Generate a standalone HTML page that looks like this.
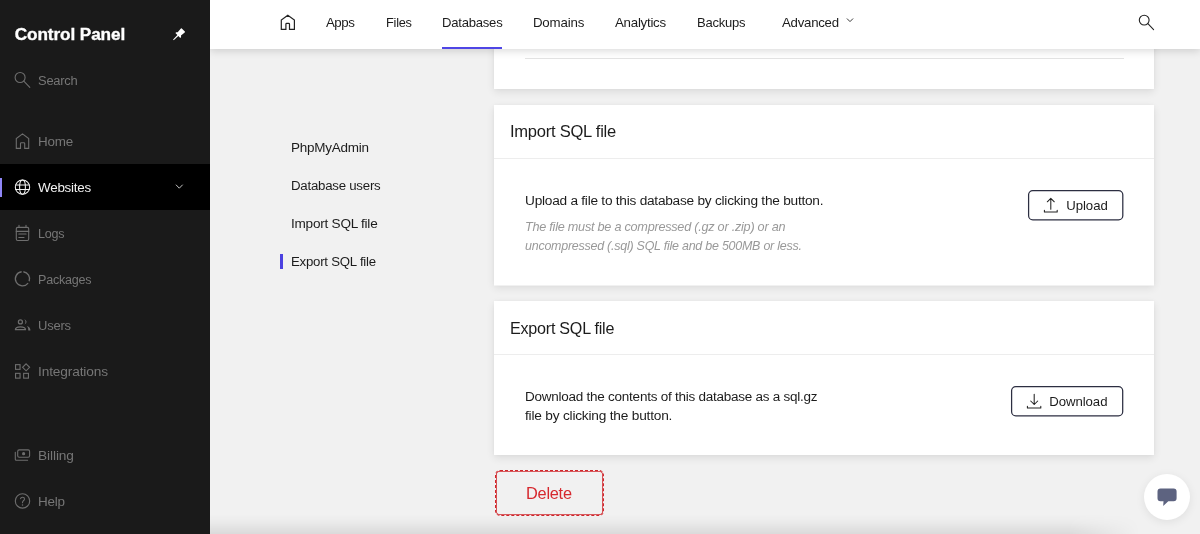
<!DOCTYPE html>
<html lang="en">
<head>
<meta charset="utf-8">
<title>Control Panel</title>
<style>
*{box-sizing:border-box;margin:0;padding:0}
html,body{width:1200px;height:534px;overflow:hidden;background:#f1f1f1}
body{font-family:"Liberation Sans","DejaVu Sans",sans-serif;position:relative}
#root{position:absolute;left:0;top:0;width:1200px;height:534px;overflow:hidden;will-change:transform;background:#f1f1f1}
.abs{position:absolute}
.t{position:absolute;line-height:20px;white-space:nowrap}
.brand{-webkit-text-stroke:0.35px #fff}
#side{position:absolute;left:0;top:0;width:210px;height:534px;background:#1a1a1a}
#active{position:absolute;left:0;top:164px;width:210px;height:46px;background:#000}
#active:before{content:"";position:absolute;left:0;top:14px;width:2.3px;height:19px;background:#8f86f7}
#top{position:absolute;left:210px;top:0;width:990px;height:49px;background:#fff;box-shadow:0 1.5px 8px rgba(0,0,0,.15)}
#uline{position:absolute;left:442px;top:47px;width:60.3px;height:2px;background:#4f46e5}
.card{position:absolute;left:494.3px;width:659.7px;background:#fff;box-shadow:0 3px 8px rgba(0,0,0,.09),0 0 3px rgba(0,0,0,.03)}
.hr{position:absolute;left:0;right:0;height:1.3px;background:#ededed}
.btn{position:absolute;border:1.2px solid #2b2e45;border-radius:4.5px;background:#fff}
#del{}
#delbox{position:absolute;left:494.5px;top:470px;width:109.3px;height:46px;border:1px dashed #d0272d;border-radius:5px;box-shadow:inset 0 0 0 0.8px #d0272d}
#chat{position:absolute;left:1144px;top:474px;width:46px;height:46px;border-radius:50%;background:#fff;box-shadow:0 2px 10px rgba(0,0,0,.08)}
#bshadow{position:absolute;left:0;top:514px;width:1200px;height:20px;background:linear-gradient(to bottom,rgba(0,0,0,0) 0%,rgba(0,0,0,.025) 40%,rgba(0,0,0,.095) 100%);-webkit-mask-image:linear-gradient(to right,#000 0,#000 89%,transparent 95%);mask-image:linear-gradient(to right,#000 0,#000 89%,transparent 95%)}
#icons{position:absolute;left:0;top:0}
</style>
</head>
<body>
<div id="root">

<!-- cards -->
<div class="card" style="top:20px;height:69px"><div class="hr" style="left:30.7px;right:30px;top:38px;height:1px;background:#e3e3e3"></div></div>
<div class="card" style="top:105px;height:180.3px"><div class="hr" style="top:52.8px"></div></div>
<div class="card" style="top:300.8px;height:154.3px"><div class="hr" style="top:53.3px"></div></div>
<div class="abs" style="left:494.3px;top:285px;width:659.7px;height:1px;background:rgba(255,255,255,.55)"></div>
<div id="delbox"></div>
<div class="abs" style="left:280.1px;top:254.2px;width:2.9px;height:15px;background:#4b41e0"></div>

<div id="bshadow"></div>
<div id="chat"></div>

<!-- top bar -->
<div id="top"></div>
<div id="uline"></div>

<!-- sidebar -->
<div id="side"><div id="active"></div></div>

<svg id="icons" width="1200" height="534" viewBox="0 0 1200 534" fill="none" stroke-linecap="round" stroke-linejoin="round">
<!-- pin -->
<g transform="translate(173.400 39.900) rotate(-45)" fill="#fff" stroke="none"><path d="M0 -0.400 L6.300 -0.650 V-3.500 L7.500 -3.400 L8.400 -2.350 L13.300 -2.700 L14 -2.500 V2.500 L13.300 2.700 L8.400 2.350 L7.500 3.400 L6.300 3.500 V0.650 L0 0.400 Z"/></g>
<!-- sidebar icons -->
<g stroke="#6e6e6e" stroke-width="1.100">
 <!-- search -->
 <circle cx="20.100" cy="77.500" r="5"/><path d="M23.800 81.200 L29.800 87.300"/>
 <!-- home -->
 <path stroke-linejoin="miter" d="M16.300 148.400 V138.600 L22.500 133.900 L28.700 138.600 V148.400 H24.700 V143.500 Q24.700 142.700 23.900 142.700 H21.300 Q20.500 142.700 20.500 143.500 V148.400 Z"/>
 <!-- logs -->
 <rect x="16.300" y="227.400" width="12.400" height="13.100" rx="1.400"/><path d="M19 225.300 V227.400 M26 225.300 V227.400 M16.300 231.400 H28.700 M18.800 234 H26.100 M18.800 237.500 H24"/>
 <!-- packages -->
 <g stroke-width="1.300" stroke-linecap="butt"><path d="M23.360 271.750 A7.100 7.100 0 0 1 29.150 281.300"/><path d="M28.100 283.150 A7.100 7.100 0 1 1 21.640 271.750"/></g>
 <!-- users -->
 <g stroke-width="1.250"><circle cx="20.400" cy="321.900" r="2"/><path d="M15.400 329.700 Q15.400 326.800 20.400 326.800 Q25.500 326.800 25.500 329.700 Z"/></g>
 <!-- integrations -->
 <g stroke-linejoin="miter"><rect x="15.550" y="364.650" width="4.500" height="4.700"/><rect x="15.550" y="373.350" width="4.500" height="4.800"/><rect x="23.650" y="373.350" width="4.800" height="4.800"/><path d="M26.100 363.800 L29.600 367.300 L26.100 370.800 L22.600 367.300 Z"/></g>
 <!-- billing -->
 <rect x="17.700" y="449.900" width="11.900" height="7.400" rx="1.500"/><path d="M15.300 452.200 V459.200 Q15.300 460.200 16.300 460.200 H27.600"/>
 <!-- help -->
 <circle cx="22.500" cy="500.900" r="7.200"/><path d="M20.600 498.700 Q20.800 497.300 22.600 497.300 Q24.500 497.300 24.500 498.900 Q24.500 499.900 23.300 500.800 Q22.500 501.500 22.500 502.800"/>
</g>
<g fill="#6e6e6e" stroke="none">
<circle cx="23.600" cy="453.700" r="1.600"/>
<circle cx="22.500" cy="504.900" r="0.750"/>
<path d="M24.300 319 Q28.700 321.800 24.600 324.600 Q26.500 321.800 24.300 319 Z"/>
<path d="M27 326 Q30.600 327.200 30.400 330.400 H28.300 Q28.600 328 27 326 Z"/>
</g>
<!-- globe (active) -->
<g stroke="#f4f4f4" stroke-width="1.050"><circle cx="22.500" cy="187.100" r="7.200"/><ellipse cx="22.500" cy="187.100" rx="2.900" ry="7.200"/><path d="M15.700 185.050 H29.300 M15.700 189.400 H29.300"/></g>
<path d="M176.200 185 L179.300 188.200 L182.400 185" stroke="#cfcfcf" stroke-width="0.950"/>
<!-- top home -->
<g stroke="#222" stroke-width="1.200">
<path stroke-linejoin="miter" d="M281.300 29.300 V20.100 L287.800 15.300 L294.400 20.100 V29.300 H289.500 V24.200 Q289.500 23.400 288.700 23.400 H286.700 Q285.900 23.400 285.900 24.200 V29.300 Z"/>
<path d="M847.200 18.800 L850 21.600 L852.800 18.800" stroke-width="0.900"/>
<circle cx="1144.200" cy="20.100" r="4.900" stroke-width="1.100"/><path d="M1147.900 23.700 L1153.600 29.600" stroke-width="1.100"/>
</g>
<!-- buttons -->
<g stroke="#2c2e41" stroke-width="1.250" fill="#fff"><rect x="1028.600" y="190.600" width="94.200" height="29.300" rx="4.200"/><rect x="1011.600" y="386.600" width="111.100" height="29.300" rx="4.200"/></g>
<!-- upload / download icons -->
<g stroke="#222" stroke-width="1.050">
<path d="M1050.800 209.300 V198.300 M1047.300 201.800 L1050.800 198.300 L1054.300 201.800 M1044.400 210.300 V212 H1057.200 V210.300"/>
<path d="M1034.200 394.200 V404.500 M1030.700 401 L1034.200 404.500 L1037.700 401 M1027.400 406.300 V408 H1040.800 V406.300"/>
</g>
<!-- chat -->
<path d="M1160.500 488.500 H1173.600 Q1176.600 488.500 1176.600 491.500 V498.200 Q1176.600 501.200 1173.600 501.200 H1168.300 L1163.200 505.900 L1163.500 501.200 H1160.500 Q1157.500 501.200 1157.500 498.200 V491.500 Q1157.500 488.500 1160.500 488.500 Z" fill="#5d6380"/>
</svg>


<div id="brand" class="t brand" style="left:14.80px;top:24.24px;font-size:17.20px;letter-spacing:-0.111px;color:#fff;font-weight:bold;">Control Panel</div>
<div id="s_search" class="t" style="left:37.50px;top:70.65px;font-size:13.70px;letter-spacing:-0.250px;color:#767676;transform:scaleX(0.9448);transform-origin:0 50%;">Search</div>
<div id="s_home" class="t" style="left:38.10px;top:131.85px;font-size:13.70px;letter-spacing:-0.250px;color:#767676;transform:scaleX(0.9814);transform-origin:0 50%;">Home</div>
<div id="s_web" class="t" style="left:37.60px;top:177.75px;font-size:13.70px;letter-spacing:-0.250px;color:#f2f2f2;transform:scaleX(0.9798);transform-origin:0 50%;">Websites</div>
<div id="s_logs" class="t" style="left:38.10px;top:223.55px;font-size:13.70px;letter-spacing:-0.250px;color:#767676;transform:scaleX(0.9192);transform-origin:0 50%;">Logs</div>
<div id="s_pack" class="t" style="left:38.10px;top:269.85px;font-size:13.70px;letter-spacing:-0.250px;color:#767676;transform:scaleX(0.9182);transform-origin:0 50%;">Packages</div>
<div id="s_users" class="t" style="left:38.10px;top:315.75px;font-size:13.70px;letter-spacing:-0.250px;color:#767676;transform:scaleX(0.9496);transform-origin:0 50%;">Users</div>
<div id="s_integ" class="t" style="left:38.10px;top:361.55px;font-size:13.70px;letter-spacing:-0.148px;color:#767676;">Integrations</div>
<div id="s_bill" class="t" style="left:38.10px;top:445.75px;font-size:13.70px;letter-spacing:-0.111px;color:#767676;">Billing</div>
<div id="s_help" class="t" style="left:38.10px;top:491.55px;font-size:13.70px;letter-spacing:-0.250px;color:#767676;transform:scaleX(0.9852);transform-origin:0 50%;">Help</div>
<div id="t_apps" class="t" style="left:325.90px;top:12.89px;font-size:13.30px;letter-spacing:-0.451px;color:#1c1c1c;">Apps</div>
<div id="t_files" class="t" style="left:385.50px;top:12.89px;font-size:13.30px;letter-spacing:-0.250px;color:#1c1c1c;transform:scaleX(0.9602);transform-origin:0 50%;">Files</div>
<div id="t_db" class="t" style="left:441.70px;top:12.89px;font-size:13.30px;letter-spacing:-0.250px;color:#1c1c1c;transform:scaleX(0.9857);transform-origin:0 50%;">Databases</div>
<div id="t_dom" class="t" style="left:532.90px;top:12.89px;font-size:13.30px;letter-spacing:-0.161px;color:#1c1c1c;">Domains</div>
<div id="t_an" class="t" style="left:615.00px;top:12.89px;font-size:13.30px;letter-spacing:-0.261px;color:#1c1c1c;">Analytics</div>
<div id="t_back" class="t" style="left:697.00px;top:12.89px;font-size:13.30px;letter-spacing:-0.250px;color:#1c1c1c;transform:scaleX(0.9798);transform-origin:0 50%;">Backups</div>
<div id="t_adv" class="t" style="left:781.90px;top:12.89px;font-size:13.30px;letter-spacing:-0.250px;color:#1c1c1c;transform:scaleX(0.9947);transform-origin:0 50%;">Advanced</div>
<div id="n_php" class="t" style="left:291.00px;top:137.65px;font-size:13.70px;letter-spacing:-0.250px;color:#1c1c1c;transform:scaleX(0.9841);transform-origin:0 50%;">PhpMyAdmin</div>
<div id="n_dbu" class="t" style="left:291.00px;top:175.65px;font-size:13.70px;letter-spacing:-0.250px;color:#1c1c1c;transform:scaleX(0.9684);transform-origin:0 50%;">Database users</div>
<div id="n_imp" class="t" style="left:291.00px;top:213.55px;font-size:13.70px;letter-spacing:-0.250px;color:#1c1c1c;transform:scaleX(0.9933);transform-origin:0 50%;">Import SQL file</div>
<div id="n_exp" class="t" style="left:291.00px;top:251.65px;font-size:13.70px;letter-spacing:-0.250px;color:#1c1c1c;transform:scaleX(0.9665);transform-origin:0 50%;">Export SQL file</div>
<div id="h_imp" class="t" style="left:509.50px;top:121.75px;font-size:16.60px;letter-spacing:-0.250px;color:#1c1c1c;transform:scaleX(0.9967);transform-origin:0 50%;">Import SQL file</div>
<div id="h_exp" class="t" style="left:509.50px;top:318.95px;font-size:16.60px;letter-spacing:-0.250px;color:#1c1c1c;transform:scaleX(0.9713);transform-origin:0 50%;">Export SQL file</div>
<div id="b_up" class="t" style="left:525.00px;top:190.85px;font-size:13.70px;letter-spacing:-0.250px;color:#1c1c1c;transform:scaleX(0.9993);transform-origin:0 50%;">Upload a file to this database by clicking the button.</div>
<div id="i_1" class="t" style="left:525.00px;top:216.83px;font-size:12.90px;letter-spacing:-0.250px;color:#999;font-style:italic;transform:scaleX(0.9820);transform-origin:0 50%;">The file must be a compressed (.gz or .zip) or an</div>
<div id="i_2" class="t" style="left:525.00px;top:235.53px;font-size:12.90px;letter-spacing:-0.250px;color:#999;font-style:italic;transform:scaleX(0.9672);transform-origin:0 50%;">uncompressed (.sql) SQL file and be 500MB or less.</div>
<div id="b_d1" class="t" style="left:525.00px;top:386.55px;font-size:13.70px;letter-spacing:-0.250px;color:#1c1c1c;transform:scaleX(0.9862);transform-origin:0 50%;">Download the contents of this database as a sql.gz</div>
<div id="b_d2" class="t" style="left:525.00px;top:405.95px;font-size:13.70px;letter-spacing:-0.205px;color:#1c1c1c;">file by clicking the button.</div>
<div id="bt_up" class="t" style="left:1066.20px;top:195.53px;font-size:13.20px;letter-spacing:-0.039px;color:#1c1c1c;">Upload</div>
<div id="bt_dl" class="t" style="left:1049.20px;top:391.53px;font-size:13.20px;letter-spacing:-0.051px;color:#1c1c1c;">Download</div>
<div id="del" class="t" style="left:525.80px;top:483.75px;font-size:16.60px;letter-spacing:-0.250px;color:#d6282e;transform:scaleX(0.9846);transform-origin:0 50%;">Delete</div>

</div>
</body>
</html>
